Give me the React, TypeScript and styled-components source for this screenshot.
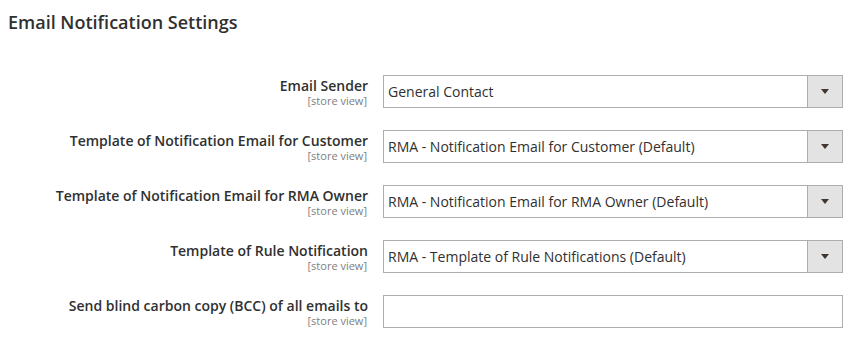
import styled, { createGlobalStyle } from "styled-components";

const GlobalStyle = createGlobalStyle`
  body {
    margin: 0;
    background: #ffffff;
    font-family: "Open Sans", "Liberation Sans", sans-serif;
    color: #303030;
  }
`;

type Field = {
  label: string;
  value?: string;
  kind: "select" | "text";
};

const fields: Field[] = [
  { label: "Email Sender", value: "General Contact", kind: "select" },
  {
    label: "Template of Notification Email for Customer",
    value: "RMA - Notification Email for Customer (Default)",
    kind: "select",
  },
  {
    label: "Template of Notification Email for RMA Owner",
    value: "RMA - Notification Email for RMA Owner (Default)",
    kind: "select",
  },
  {
    label: "Template of Rule Notification",
    value: "RMA - Template of Rule Notifications (Default)",
    kind: "select",
  },
  { label: "Send blind carbon copy (BCC) of all emails to", kind: "text" },
];

const App = () => {
  return (
    <>
      <GlobalStyle />
      <Section>
        <Title>Email Notification Settings</Title>
        <FieldList>
          {fields.map((field) => (
            <Row key={field.label}>
              <LabelCell>
                <Label>{field.label}</Label>
                <Scope>[store view]</Scope>
              </LabelCell>
              {field.kind === "select" ? (
                <SelectBox>
                  <SelectValue>{field.value}</SelectValue>
                  <ArrowButton>
                    <Arrow />
                  </ArrowButton>
                </SelectBox>
              ) : (
                <TextInput type="text" />
              )}
            </Row>
          ))}
        </FieldList>
      </Section>
    </>
  );
};

const Section = styled.div`
  padding: 11px 0 0 8px;
`;

const Title = styled.h2`
  margin: 0;
  font-size: 18px;
  font-weight: 600;
  line-height: 23px;
  color: #303030;
`;

const FieldList = styled.div`
  display: flex;
  flex-direction: column;
  gap: 22px;
  margin-top: 41px;
`;

const Row = styled.div`
  display: grid;
  grid-template-columns: 375px 460px;
`;

const LabelCell = styled.div`
  display: flex;
  flex-direction: column;
  align-items: flex-end;
  padding: 3px 15px 0 0;
`;

const Label = styled.span`
  font-size: 14px;
  font-weight: 600;
  line-height: 16px;
  color: #303030;
`;

const Scope = styled.span`
  font-size: 11px;
  line-height: 13px;
  color: #808080;
  margin-right: 1px;
`;

const SelectBox = styled.div`
  display: flex;
  height: 33px;
  box-sizing: border-box;
  border: 1px solid #adadad;
  background: #ffffff;
`;

const SelectValue = styled.div`
  flex: 1;
  display: flex;
  align-items: center;
  padding-left: 4px;
  font-size: 14px;
  color: #303030;
`;

const ArrowButton = styled.div`
  width: 34px;
  display: flex;
  align-items: center;
  justify-content: center;
  background: #e3e3e3;
  border-left: 1px solid #adadad;
`;

const Arrow = styled.span`
  width: 0;
  height: 0;
  border-left: 4px solid transparent;
  border-right: 4px solid transparent;
  border-top: 5px solid #41362f;
`;

const TextInput = styled.input`
  height: 33px;
  box-sizing: border-box;
  border: 1px solid #adadad;
  background: #ffffff;
  margin: 0;
  padding: 0 5px;
  font-family: inherit;
  font-size: 14px;
`;

export default App;
